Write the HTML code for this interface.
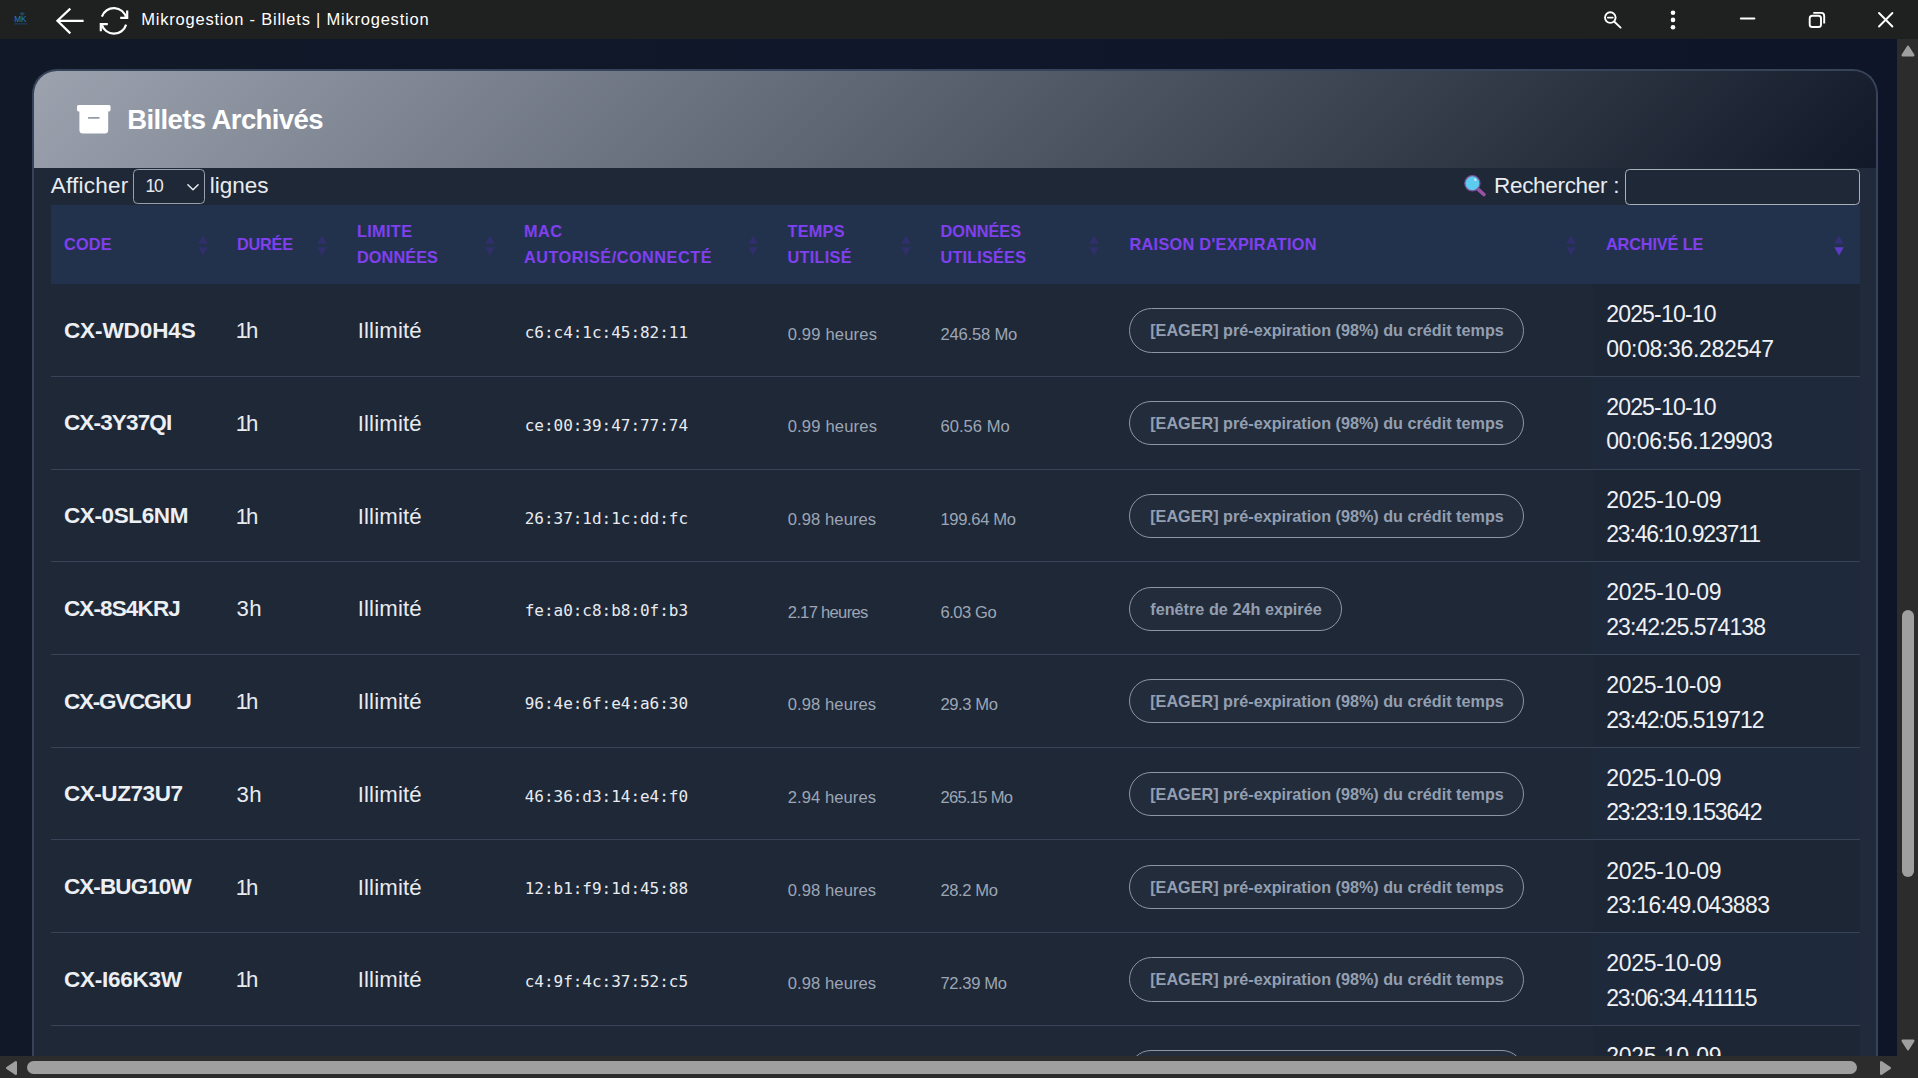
<!DOCTYPE html>
<html lang="fr">
<head>
<meta charset="utf-8">
<title>Mikrogestion - Billets | Mikrogestion</title>
<style>
*{box-sizing:border-box;margin:0;padding:0}
html,body{width:1918px;height:1078px;overflow:hidden;background:#0f172a}
body{position:relative;font-family:"Liberation Sans",sans-serif;color:#e8ebf0}
#view{position:absolute;left:0;top:0;width:1897px;height:1056px;overflow:hidden;background:linear-gradient(90deg,#111827 0%,#10172a 50%,#0f1528 100%)}
#titlebar{position:absolute;left:0;top:0;width:1918px;height:39px;background:#1f2020;z-index:10}
#titlebar svg{position:absolute;overflow:visible}
#titlebar .ttl{position:absolute;left:141.3px;top:0;height:39px;line-height:39.5px;font-size:16.5px;color:#fff;white-space:nowrap}
#card{position:absolute;left:32px;top:69px;width:1846px;height:1100px;border:2px solid #36435a;border-bottom:0;border-radius:25px 25px 0 0;background:#202a3a;overflow:hidden}
#pg{position:absolute;left:-34px;top:-71px;width:1918px;height:1200px}
#chead{position:absolute;left:34px;top:71px;width:1842px;height:97px;background:linear-gradient(135deg,#9ca3af 0%,#111827 100%)}
#chead .h{position:absolute;left:93.2px;top:0;line-height:98px;font-size:27.5px;font-weight:bold;color:#fff;white-space:nowrap}
#chead svg{position:absolute;left:42.8px;top:34px}
#wrap{position:absolute;left:34px;top:168px;width:1826px;height:1000px;background:#1f2837}
.ctl{position:absolute;top:168px;height:37px;line-height:35px;font-size:22.5px;color:#e8ebf0;white-space:nowrap}
.sel{position:absolute;left:133px;top:169px;width:72px;height:35px;border:1px solid #9aa1ad;border-radius:4.5px;background:#1f2837}
.sel span{position:absolute;left:11.6px;top:0;line-height:33.5px;font-size:17.5px;color:#e8ebf0}
.sel svg{position:absolute;left:52px;top:13px}
.inp{position:absolute;left:1625px;top:169px;width:235px;height:36px;border:1px solid #aab0ba;border-radius:4.5px;background:#1f2837}
#thead{position:absolute;left:51px;top:205px;width:1809px;height:79px;background:#23324c}
.th{position:absolute;font-size:16.3px;margin-top:-.4px;font-weight:bold;color:#8040f0;white-space:nowrap;line-height:26px;text-transform:none}
.so{position:absolute;top:235px;width:10px;height:21px}
.tr{position:absolute;left:0;width:1897px;height:92.71px}
.tr::before{content:"";position:absolute;left:51px;top:0;width:1809px;height:91.71px;border-bottom:1px solid #384357;z-index:1}
.sorted{position:absolute;left:1593px;top:0;width:267px;height:92.71px;z-index:0}
.odd .sorted{background:#1d2634}
.even .sorted{background:#1f293c}
.c{position:absolute;z-index:2;top:0;height:91.7px;line-height:91.7px;white-space:nowrap}
.code{font-size:22.5px;font-weight:bold;color:#eceff3;margin-top:.6px}
.dur,.lim{font-size:22.2px;color:#e8ebf0;margin-top:1.2px}
.mac{font-family:"DejaVu Sans Mono","Liberation Mono",monospace;font-size:16px;color:#e8ebf0;margin-top:3.05px}
.sm{font-size:16.6px;color:#9ca6b5;margin-top:4.4px}
.d1,.d2{font-size:23px;color:#eef1f5;line-height:34.5px;height:34.5px}
.d1{top:13.1px}
.d2{top:47.5px}
.badge{position:absolute;z-index:2;top:24.27px;height:44.22px;border:1px solid #8b96a8;border-radius:23px;background:#222c3b;text-align:center;white-space:nowrap}
.bt{display:inline-block;line-height:42px;font-size:16.2px;font-weight:bold;color:#939fb1;margin-right:-1px}
#vs{position:absolute;left:1897px;top:39px;width:21px;height:1017px;background:#2c2c2c}
#vs i{position:absolute;left:5px;top:571px;width:12px;height:267px;border-radius:6px;background:#9f9f9f}
#hs{position:absolute;left:0;top:1056px;width:1918px;height:22px;background:#2c2c2c}
#hs i{position:absolute;left:27px;top:5px;width:1830px;height:13px;border-radius:6.5px;background:#9f9f9f}
#vs svg,#hs svg{position:absolute}
</style>
</head>
<body>
<div id="view">
<div id="card"><div id="pg">
<div id="chead">
<svg width="34" height="30" viewBox="0 0 34 30"><path fill="#fff" d="M1.6 0h30.4a1.6 1.6 0 0 1 1.6 1.6v3.2a1.6 1.6 0 0 1-1.6 1.6H1.6A1.6 1.6 0 0 1 0 4.800V1.6A1.6 1.600 0 0 1 1.600 0zM2.400 6.400h28.800V25a3.500 3.500 0 0 1-3.500 3.500H5.900A3.500 3.500 0 0 1 2.400 25zM11.800 12a.9.900 0 0 0 0 1.800h10a.9.900 0 0 0 0-1.800z" fill-rule="evenodd"/></svg>
<div class="h" style="letter-spacing:-0.602px">Billets Archivés</div>
</div>
<div id="wrap"></div>
<span class="ctl" style="left:50.7px;letter-spacing:0.246px">Afficher</span>
<div class="sel"><span style="letter-spacing:-1.369px">10</span><svg width="14" height="9" viewBox="0 0 14 9"><path d="M1.900 1.800 7 6.700 12.100 1.800" fill="none" stroke="#e8ebf0" stroke-width="1.500" stroke-linecap="round" stroke-linejoin="round"/></svg></div>
<span class="ctl" style="left:209.7px;letter-spacing:0.001px">lignes</span>
<svg style="position:absolute;left:1463px;top:175px" width="24" height="22" viewBox="0 0 24 22"><line x1="15.200" y1="14.300" x2="20.900" y2="19.500" stroke="#9a52a6" stroke-width="3.600" stroke-linecap="round"/><circle cx="9.400" cy="8.300" r="7.600" fill="#5ccbee" stroke="#7a4f99" stroke-width="1.300"/><circle cx="12.300" cy="4.700" r="1.200" fill="#c9f0fb"/></svg>
<span class="ctl" style="left:1494px;letter-spacing:-0.310px">Rechercher :</span>
<div class="inp"></div>
<div id="thead"></div>
<span class="th" style="left:64px;top:231.5px;letter-spacing:0.151px">CODE</span>
<span class="th" style="left:237px;top:231.5px;letter-spacing:-0.250px">DURÉE</span>
<span class="th" style="left:357px;top:218.5px;letter-spacing:0.328px">LIMITE</span>
<span class="th" style="left:357px;top:244.5px;letter-spacing:0.078px">DONNÉES</span>
<span class="th" style="left:524px;top:218.5px;letter-spacing:0.461px">MAC</span>
<span class="th" style="left:524px;top:244.5px;letter-spacing:0.486px">AUTORISÉ/CONNECTÉ</span>
<span class="th" style="left:787.5px;top:218.5px;letter-spacing:0.227px">TEMPS</span>
<span class="th" style="left:787.5px;top:244.5px;letter-spacing:0.263px">UTILISÉ</span>
<span class="th" style="left:940.5px;top:218.5px;letter-spacing:-0.005px">DONNÉES</span>
<span class="th" style="left:940.5px;top:244.5px;letter-spacing:0.170px">UTILISÉES</span>
<span class="th" style="left:1129.5px;top:231.5px;letter-spacing:0.290px">RAISON D'EXPIRATION</span>
<span class="th" style="left:1606px;top:231.5px;letter-spacing:-0.145px">ARCHIVÉ LE</span>
<svg class="so" style="left:198.0px" viewBox="0 0 10 21"><path d="M5 0.500 9.700 8.700H0.300z" fill="#312f6b"/><path d="M5 20.500 9.700 12.300H0.300z" fill="#312f6b"/></svg>
<svg class="so" style="left:317.0px" viewBox="0 0 10 21"><path d="M5 0.500 9.700 8.700H0.300z" fill="#312f6b"/><path d="M5 20.500 9.700 12.300H0.300z" fill="#312f6b"/></svg>
<svg class="so" style="left:485.0px" viewBox="0 0 10 21"><path d="M5 0.500 9.700 8.700H0.300z" fill="#312f6b"/><path d="M5 20.500 9.700 12.300H0.300z" fill="#312f6b"/></svg>
<svg class="so" style="left:748.0px" viewBox="0 0 10 21"><path d="M5 0.500 9.700 8.700H0.300z" fill="#312f6b"/><path d="M5 20.500 9.700 12.300H0.300z" fill="#312f6b"/></svg>
<svg class="so" style="left:901.0px" viewBox="0 0 10 21"><path d="M5 0.500 9.700 8.700H0.300z" fill="#312f6b"/><path d="M5 20.500 9.700 12.300H0.300z" fill="#312f6b"/></svg>
<svg class="so" style="left:1089.0px" viewBox="0 0 10 21"><path d="M5 0.500 9.700 8.700H0.300z" fill="#312f6b"/><path d="M5 20.500 9.700 12.300H0.300z" fill="#312f6b"/></svg>
<svg class="so" style="left:1566.4px" viewBox="0 0 10 21"><path d="M5 0.500 9.700 8.700H0.300z" fill="#312f6b"/><path d="M5 20.500 9.700 12.300H0.300z" fill="#312f6b"/></svg>
<svg class="so" style="left:1833.8px" viewBox="0 0 10 21"><path d="M5 0.500 9.700 8.700H0.300z" fill="#352f78"/><path d="M5 20.500 9.700 12.300H0.300z" fill="#5f3bc9"/></svg>
<div class="tr odd" style="top:284.16px"><div class="sorted"></div><span class="c code" style="left:63.9px;letter-spacing:-0.079px">CX-WD0H4S</span><span class="c dur" style="left:235.7px;letter-spacing:-2.1px">1h</span><span class="c lim" style="left:357.7px;letter-spacing:0.161px">Illimité</span><span class="c mac" style="left:524.7px;letter-spacing:-0.023px">c6:c4:1c:45:82:11</span><span class="c sm" style="left:787.7px;letter-spacing:0.164px">0.99 heures</span><span class="c sm" style="left:940.4px;letter-spacing:-0.190px">246.58 Mo</span><span class="badge" style="left:1129px;width:395px"><span class="bt" style="letter-spacing:0.002px">[EAGER] pré-expiration (98%) du crédit temps</span></span><span class="c d1" style="left:1606.2px;letter-spacing:-0.817px">2025-10-10</span><span class="c d2" style="left:1606.2px;letter-spacing:-0.341px">00:08:36.282547</span></div>
<div class="tr even" style="top:376.87px"><div class="sorted"></div><span class="c code" style="left:63.9px;letter-spacing:-0.833px">CX-3Y37QI</span><span class="c dur" style="left:235.7px;letter-spacing:-2.1px">1h</span><span class="c lim" style="left:357.7px;letter-spacing:0.161px">Illimité</span><span class="c mac" style="left:524.7px;letter-spacing:-0.023px">ce:00:39:47:77:74</span><span class="c sm" style="left:787.7px;letter-spacing:0.164px">0.99 heures</span><span class="c sm" style="left:940.4px;letter-spacing:0.030px">60.56 Mo</span><span class="badge" style="left:1129px;width:395px"><span class="bt" style="letter-spacing:0.002px">[EAGER] pré-expiration (98%) du crédit temps</span></span><span class="c d1" style="left:1606.2px;letter-spacing:-0.817px">2025-10-10</span><span class="c d2" style="left:1606.2px;letter-spacing:-0.434px">00:06:56.129903</span></div>
<div class="tr odd" style="top:469.58px"><div class="sorted"></div><span class="c code" style="left:63.9px;letter-spacing:-0.366px">CX-0SL6NM</span><span class="c dur" style="left:235.7px;letter-spacing:-2.1px">1h</span><span class="c lim" style="left:357.7px;letter-spacing:0.161px">Illimité</span><span class="c mac" style="left:524.7px;letter-spacing:-0.023px">26:37:1d:1c:dd:fc</span><span class="c sm" style="left:787.7px;letter-spacing:0.084px">0.98 heures</span><span class="c sm" style="left:940.4px;letter-spacing:-0.353px">199.64 Mo</span><span class="badge" style="left:1129px;width:395px"><span class="bt" style="letter-spacing:0.002px">[EAGER] pré-expiration (98%) du crédit temps</span></span><span class="c d1" style="left:1606.2px;letter-spacing:-0.262px">2025-10-09</span><span class="c d2" style="left:1606.2px;letter-spacing:-1.155px">23:46:10.923711</span></div>
<div class="tr even" style="top:562.29px"><div class="sorted"></div><span class="c code" style="left:63.9px;letter-spacing:-0.862px">CX-8S4KRJ</span><span class="c dur" style="left:236.6px;letter-spacing:0.212px">3h</span><span class="c lim" style="left:357.7px;letter-spacing:0.161px">Illimité</span><span class="c mac" style="left:524.7px;letter-spacing:-0.023px">fe:a0:c8:b8:0f:b3</span><span class="c sm" style="left:787.7px;letter-spacing:-0.706px">2.17 heures</span><span class="c sm" style="left:940.4px;letter-spacing:-0.458px">6.03 Go</span><span class="badge" style="left:1129px;width:213px"><span class="bt" style="letter-spacing:0.026px">fenêtre de 24h expirée</span></span><span class="c d1" style="left:1606.2px;letter-spacing:-0.262px">2025-10-09</span><span class="c d2" style="left:1606.2px;letter-spacing:-0.919px">23:42:25.574138</span></div>
<div class="tr odd" style="top:655.00px"><div class="sorted"></div><span class="c code" style="left:63.9px;letter-spacing:-1.214px">CX-GVCGKU</span><span class="c dur" style="left:235.7px;letter-spacing:-2.1px">1h</span><span class="c lim" style="left:357.7px;letter-spacing:0.161px">Illimité</span><span class="c mac" style="left:524.7px;letter-spacing:-0.023px">96:4e:6f:e4:a6:30</span><span class="c sm" style="left:787.7px;letter-spacing:0.084px">0.98 heures</span><span class="c sm" style="left:940.4px;letter-spacing:-0.395px">29.3 Mo</span><span class="badge" style="left:1129px;width:395px"><span class="bt" style="letter-spacing:0.002px">[EAGER] pré-expiration (98%) du crédit temps</span></span><span class="c d1" style="left:1606.2px;letter-spacing:-0.262px">2025-10-09</span><span class="c d2" style="left:1606.2px;letter-spacing:-1.027px">23:42:05.519712</span></div>
<div class="tr even" style="top:747.71px"><div class="sorted"></div><span class="c code" style="left:63.9px;letter-spacing:-0.429px">CX-UZ73U7</span><span class="c dur" style="left:236.6px;letter-spacing:0.212px">3h</span><span class="c lim" style="left:357.7px;letter-spacing:0.161px">Illimité</span><span class="c mac" style="left:524.7px;letter-spacing:-0.023px">46:36:d3:14:e4:f0</span><span class="c sm" style="left:787.7px;letter-spacing:0.064px">2.94 heures</span><span class="c sm" style="left:940.4px;letter-spacing:-0.728px">265.15 Mo</span><span class="badge" style="left:1129px;width:395px"><span class="bt" style="letter-spacing:0.002px">[EAGER] pré-expiration (98%) du crédit temps</span></span><span class="c d1" style="left:1606.2px;letter-spacing:-0.262px">2025-10-09</span><span class="c d2" style="left:1606.2px;letter-spacing:-1.169px">23:23:19.153642</span></div>
<div class="tr odd" style="top:840.42px"><div class="sorted"></div><span class="c code" style="left:63.9px;letter-spacing:-0.902px">CX-BUG10W</span><span class="c dur" style="left:235.7px;letter-spacing:-2.1px">1h</span><span class="c lim" style="left:357.7px;letter-spacing:0.161px">Illimité</span><span class="c mac" style="left:524.7px;letter-spacing:-0.023px">12:b1:f9:1d:45:88</span><span class="c sm" style="left:787.7px;letter-spacing:0.084px">0.98 heures</span><span class="c sm" style="left:940.4px;letter-spacing:-0.395px">28.2 Mo</span><span class="badge" style="left:1129px;width:395px"><span class="bt" style="letter-spacing:0.002px">[EAGER] pré-expiration (98%) du crédit temps</span></span><span class="c d1" style="left:1606.2px;letter-spacing:-0.262px">2025-10-09</span><span class="c d2" style="left:1606.2px;letter-spacing:-0.634px">23:16:49.043883</span></div>
<div class="tr even" style="top:933.13px"><div class="sorted"></div><span class="c code" style="left:63.9px;letter-spacing:-0.229px">CX-I66K3W</span><span class="c dur" style="left:235.7px;letter-spacing:-2.1px">1h</span><span class="c lim" style="left:357.7px;letter-spacing:0.161px">Illimité</span><span class="c mac" style="left:524.7px;letter-spacing:-0.023px">c4:9f:4c:37:52:c5</span><span class="c sm" style="left:787.7px;letter-spacing:0.084px">0.98 heures</span><span class="c sm" style="left:940.4px;letter-spacing:-0.370px">72.39 Mo</span><span class="badge" style="left:1129px;width:395px"><span class="bt" style="letter-spacing:0.002px">[EAGER] pré-expiration (98%) du crédit temps</span></span><span class="c d1" style="left:1606.2px;letter-spacing:-0.262px">2025-10-09</span><span class="c d2" style="left:1606.2px;letter-spacing:-1.162px">23:06:34.411115</span></div>
<div class="tr odd" style="top:1025.84px"><div class="sorted"></div><span class="badge" style="left:1129px;width:395px"><span class="bt" style="letter-spacing:0.002px">[EAGER] pré-expiration (98%) du crédit temps</span></span><span class="c d1" style="left:1606.2px;letter-spacing:-0.262px">2025-10-09</span></div>
</div></div>
</div>
<div id="titlebar">
<div class="ttl" style="letter-spacing:0.780px">Mikrogestion - Billets | Mikrogestion</div>
<svg style="left:13px;top:11px" width="16" height="15" viewBox="0 0 16 15"><path d="M7 2.600q2.200-1.300 4.400 0M8 3.900q1.200-.6 2.400 0" fill="none" stroke="#1d78be" stroke-width=".7"/><text x="1.200" y="11.100" font-family="Liberation Sans,sans-serif" font-size="8.200" fill="#2080cc">MK</text><rect x="1.200" y="12.500" width="13.300" height=".8" fill="#174f7d"/></svg>
<svg style="left:54px;top:6px" width="32" height="30" viewBox="0 0 32 30"><path d="M29.600 14.800H3.400M16.300 2.600 3.400 14.800 16.300 27.400" fill="none" stroke="#fff" stroke-width="2.200" stroke-linejoin="miter"/></svg>
<svg style="left:98px;top:5px" width="32" height="32" viewBox="0 0 32 32"><g fill="none" stroke="#fff" stroke-width="2.200"><path d="M3.900 11.600A12.650 12.650 0 0 1 28.200 12.900"/><path d="M29.200 5.500V12.900H22.200"/><path d="M28.100 19.600A12.650 12.650 0 0 1 3.700 19.200"/><path d="M2.800 26.200V19.200H9.800"/></g></svg>
<svg style="left:1603px;top:10px" width="20" height="20" viewBox="0 0 20 20"><g fill="none" stroke="#fff" stroke-width="1.900" stroke-linecap="round"><circle cx="7.300" cy="7.600" r="5.300"/><path d="M11.400 11.700 17.600 17.600"/><path d="M4.800 7.600H9.800" stroke-width="1.700"/></g></svg>
<svg style="left:1669px;top:9px" width="8" height="22" viewBox="0 0 8 22"><circle cx="4" cy="3.700" r="2.300" fill="#fff"/><circle cx="4" cy="10.900" r="2.300" fill="#fff"/><circle cx="4" cy="18.200" r="2.300" fill="#fff"/></svg>
<svg style="left:1739px;top:16px" width="18" height="5" viewBox="0 0 18 5"><path d="M1.800 2.500H15.400" stroke="#fff" stroke-width="1.900" stroke-linecap="round"/></svg>
<svg style="left:1807px;top:10px" width="20" height="20" viewBox="0 0 20 20"><g fill="none" stroke="#fff" stroke-width="1.900"><rect x="2.700" y="5.700" width="11.300" height="11.300" rx="2.600"/><path d="M6.300 2.900H14.200A3 3 0 0 1 17.200 5.900V13.600"/></g></svg>
<svg style="left:1876px;top:10px" width="20" height="20" viewBox="0 0 20 20"><path d="M3 3 16.400 16.500M16.400 3 3 16.500" stroke="#fff" stroke-width="1.900" stroke-linecap="round"/></svg>
</div>
<div id="vs"><i></i>
<svg style="left:4px;top:6px" width="14" height="12" viewBox="0 0 14 12"><path d="M7 1.800 12.300 10.200H1.700z" fill="#9f9f9f" stroke="#9f9f9f" stroke-width="2.400" stroke-linejoin="round"/></svg>
<svg style="left:4px;top:1000px" width="14" height="12" viewBox="0 0 14 12"><path d="M7 10.200 12.300 1.800H1.700z" fill="#9f9f9f" stroke="#9f9f9f" stroke-width="2.400" stroke-linejoin="round"/></svg>
</div>
<div id="hs"><i></i>
<svg style="left:5px;top:4px" width="13" height="16" viewBox="0 0 13 16"><path d="M2.200 8 10.800 2.200V13.800z" fill="#9f9f9f" stroke="#9f9f9f" stroke-width="2.400" stroke-linejoin="round"/></svg>
<svg style="left:1879px;top:4px" width="13" height="16" viewBox="0 0 13 16"><path d="M10.800 8 2.200 2.200V13.800z" fill="#9f9f9f" stroke="#9f9f9f" stroke-width="2.400" stroke-linejoin="round"/></svg>
</div>
</body>
</html>
